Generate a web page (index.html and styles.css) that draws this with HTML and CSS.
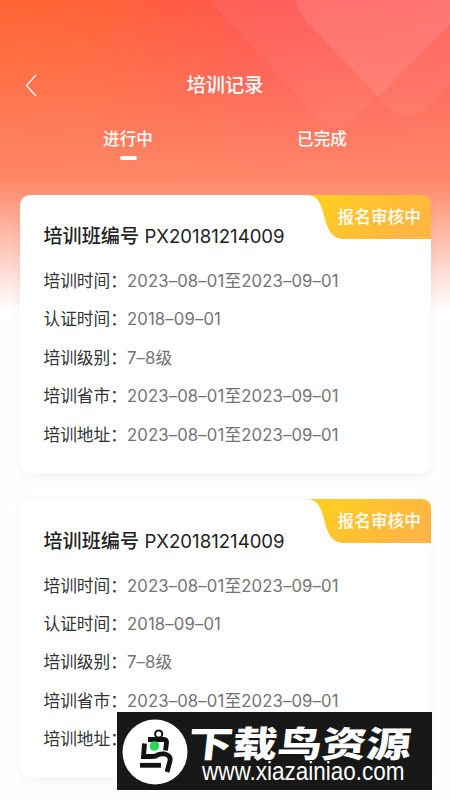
FILE: index.html
```
<!DOCTYPE html>
<html lang="zh-CN">

<head>
    <meta charset="UTF-8">
    <meta name="viewport" content="width=device-width, initial-scale=1.0">
    <title>培训记录</title>
    <link rel="stylesheet" href="styles.css">
</head>

<body>

    <!-- Header Background -->
    <svg class="header-bg" viewBox="0 0 450 320" preserveAspectRatio="none">
        <defs>
            <linearGradient id="base" x1="0" y1="0" x2="1" y2="0">
                <stop offset="0" stop-color="#ff6433" />
                <stop offset="0.22" stop-color="#ff6238" />
                <stop offset="0.6" stop-color="#ff5452" />
                <stop offset="1" stop-color="#ff5a5a" />
            </linearGradient>
            <linearGradient id="tint" x1="0" y1="0" x2="0" y2="1">
                <stop offset="0" stop-color="#ff8768" stop-opacity="0" />
                <stop offset="0.26" stop-color="#ff8768" stop-opacity="0.42" />
                <stop offset="0.56" stop-color="#ff8768" stop-opacity="1" />
            </linearGradient>
            <linearGradient id="fade" x1="0" y1="0" x2="0" y2="1">
                <stop offset="0.56" stop-color="#fff" stop-opacity="0" />
                <stop offset="0.97" stop-color="#fff" stop-opacity="1" />
            </linearGradient>
            <linearGradient id="shape" x1="0" y1="0" x2="0" y2="130" gradientUnits="userSpaceOnUse">
                <stop offset="0" stop-color="#fff" stop-opacity="0.07" />
                <stop offset="1" stop-color="#fff" stop-opacity="0.05" />
            </linearGradient>
        </defs>
        <rect width="450" height="320" fill="url(#base)" />
        <rect width="450" height="320" fill="url(#tint)" />
        <path d="M209 0 L318 118 Q338 138 356 118 L450 24 V0 Z" fill="url(#shape)" opacity="0.8" />
        <path d="M379 98 L388 108 Q408 125 428 106 L450 84 V24 Z" fill="url(#shape)" opacity="0.9" />
        <path d="M296 0 Q298 12 307 22 L379 98 L450 24 V0 Z" fill="url(#shape)" />
        <path d="M296 0 Q298 12 307 22 L379 98 L450 24 V0 Z" fill="url(#shape)" opacity="0.6" />
        <rect width="450" height="320" fill="url(#fade)" />
    </svg>

    <!-- Top Bar -->
    <header class="top-bar">
        <svg class="back-icon" viewBox="0 0 12 23">
            <path d="M11 1 L1.5 11.5 L11 22" />
        </svg>
        <h1>培训记录</h1>
    </header>

    <!-- Tabs -->
    <nav class="tabs">
        <span class="tab active">进行中</span>
        <span class="tab">已完成</span>
    </nav>

    <!-- Training Records -->
    <main class="record-list" id="recordList"></main>

    <!-- Site Banner -->
    <div class="banner">
        <svg class="banner-logo" viewBox="0 0 66 66">
            <circle cx="33" cy="33" r="32.5" fill="#fff" />
            <g fill="none" stroke="#111" stroke-width="4.8">
                <circle cx="36.7" cy="15" r="3.6" stroke-width="2" />
                <path d="M26 20.5 H42 Q45 20.5 44.5 24 L43.5 31.5" />
                <path d="M22.5 24.5 L21.5 37.5 H30 Q34 37.5 36 35.8 Q39 34.5 43 35 Q49 36.5 48 42 L45 53" />
                <path d="M18 46.3 H39" />
            </g>
            <circle cx="32.5" cy="27" r="4.8" fill="#2bd65a" />
        </svg>
        <div class="banner-text">
            <p class="banner-name">下载鸟资源</p>
            <p class="banner-url">www.xiazainiao.com</p>
        </div>
    </div>

    <script>
        const records = [
            {
                code: 'PX20181214009',
                status: '报名审核中',
                rows: [
                    ['培训时间', '2023–08–01至2023–09–01'],
                    ['认证时间', '2018–09–01'],
                    ['培训级别', '7–8级'],
                    ['培训省市', '2023–08–01至2023–09–01'],
                    ['培训地址', '2023–08–01至2023–09–01']
                ]
            },
            {
                code: 'PX20181214009',
                status: '报名审核中',
                rows: [
                    ['培训时间', '2023–08–01至2023–09–01'],
                    ['认证时间', '2018–09–01'],
                    ['培训级别', '7–8级'],
                    ['培训省市', '2023–08–01至2023–09–01'],
                    ['培训地址', '2023–08–01至2023–09–01']
                ]
            }
        ];

        const recordList = document.getElementById('recordList');

        records.forEach(record => {
            const rows = record.rows.map(([label, value]) => `
                <div class="record-row">
                    <span class="label">${label}：</span>
                    <span class="value">${value}</span>
                </div>`).join('');

            recordList.innerHTML += `
                <section class="record-card">
                    <div class="status">
                        <svg class="status-bg" viewBox="0 0 124 44" preserveAspectRatio="none">
                            <defs>
                                <linearGradient id="gold" x1="0" y1="0" x2="1" y2="0.4">
                                    <stop offset="0" stop-color="#ffd21c" />
                                    <stop offset="1" stop-color="#ffb541" />
                                </linearGradient>
                            </defs>
                            <path d="M0 0 H114 Q124 0 124 10 V44 H37 C25 44 21 35 18 24 C14 9 12 1 0 0 Z" fill="url(#gold)" />
                        </svg>
                        <span class="status-text">${record.status}</span>
                    </div>
                    <h2><span>培训班编号</span><span class="code">${record.code}</span></h2>
                    ${rows}
                </section>`;
        });
    </script>

</body>

</html>
```
FILE: styles.css
```
/* Global Styles */
* {
    box-sizing: border-box;
}

body {
    position: relative;
    width: 450px;
    height: 800px;
    margin: 0;
    overflow: hidden;
    background: #fefefe;
    font-family: Inter, 'Noto Sans CJK SC', sans-serif;
    color: #333;
}

h1, h2, p {
    margin: 0;
}

/* Header Background */
.header-bg {
    position: absolute;
    top: 0;
    left: 0;
    z-index: -1;
    width: 450px;
    height: 320px;
}

/* Top Bar */
.top-bar {
    display: grid;
    grid-template-columns: 1fr auto 1fr;
    align-items: center;
    height: 50px;
    margin-top: 60px;
    padding: 0 25px;
}

.back-icon {
    width: 12px;
    height: 23px;
    fill: none;
    stroke: #fff;
    stroke-width: 1.3;
}

.top-bar h1 {
    font-size: 19.2px;
    line-height: 30px;
    font-weight: 500;
    color: #fff;
}

/* Tabs */
.tabs {
    display: flex;
    justify-content: space-around;
    height: 84px;
    padding: 15px 31px 0;
}

.tab {
    display: flex;
    flex-direction: column;
    align-items: center;
    width: 194px;
    font-size: 16.6px;
    line-height: 28px;
    font-weight: 500;
    color: #fff;
}

.tab.active::after {
    content: '';
    width: 17px;
    height: 4px;
    margin-top: 3px;
    border-radius: 2px;
    background: #fff;
}

/* Record Cards */
.record-list {
    display: flex;
    flex-direction: column;
    gap: 26.5px;
    padding: 0.5px 19px 0 19.5px;
}

.record-card {
    position: relative;
    flex: none;
    height: 278px;
    padding: 23.5px 24px 0;
    border-radius: 10px;
    background: #fff;
    box-shadow: 0 3px 12px rgba(0, 0, 0, 0.05);
}

.record-card h2 {
    display: flex;
    gap: 5.5px;
    height: 36px;
    margin-bottom: 8px;
    font-size: 19.1px;
    line-height: 36px;
    font-weight: 500;
    color: #222;
}

.code {
    font-size: 18.6px;
    font-weight: 400;
}

.record-row {
    display: flex;
    height: 38.4px;
    font-size: 16.7px;
    line-height: 38.4px;
}

.value {
    color: #737373;
    letter-spacing: 0.14px;
}

/* Status Badge */
.status {
    position: absolute;
    top: 0;
    right: 0;
    width: 124px;
    height: 44px;
}

.status-bg {
    display: block;
    width: 124px;
    height: 44px;
}

.status-text {
    position: absolute;
    top: 8px;
    right: 10px;
    font-size: 16.7px;
    line-height: 28px;
    font-weight: 500;
    color: #fff;
}

/* Site Banner */
.banner {
    position: absolute;
    left: 117px;
    top: 712px;
    display: flex;
    gap: 1px;
    width: 315px;
    height: 78px;
    padding: 7px 5px;
    background: #181818;
    color: #fff;
}

.banner-logo {
    flex: none;
    width: 66px;
    height: 66px;
}

.banner-name {
    height: 38px;
    font-family: 'Noto Sans CJK SC', sans-serif;
    font-size: 44.6px;
    line-height: 48px;
    font-weight: 900;
    white-space: nowrap;
    transform: skewX(-6deg) scaleY(0.8);
    transform-origin: left center;
}

.banner-url {
    padding-left: 13px;
    font-family: 'Liberation Sans', sans-serif;
    font-size: 25px;
    line-height: 28px;
    transform: scaleX(0.9);
    transform-origin: 13px center;
}
```
